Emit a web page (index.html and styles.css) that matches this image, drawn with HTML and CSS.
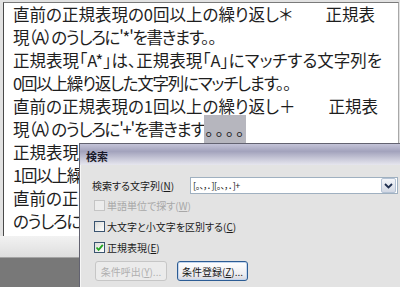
FILE: index.html
```html
<!DOCTYPE html>
<html lang="ja">
<head>
  <meta charset="UTF-8">
  <meta name="viewport" content="width=device-width, initial-scale=1.0">
  <title>検索</title>
  <link rel="stylesheet" href="styles.css">
</head>
<body>
  <div class="screen">
    <div class="editor">
      <div class="doc">
        <div class="line">直前の正規表現の0回以上の繰り返し＊　　正規表</div>
        <div class="line tight">現（A）のうしろに'*'を書きます。。</div>
        <div class="line">正規表現「A*」は、正規表現「A」にマッチする文字列を</div>
        <div class="line tight">0回以上繰り返した文字列にマッチします。。</div>
        <div class="line">直前の正規表現の1回以上の繰り返し＋　　正規表</div>
        <div class="line tight">現（A）のうしろに'+'を書きます<span class="sel">。。。。</span></div>
        <div class="line">正規表現「A+」は、正規表現「A」にマッチする</div>
        <div class="line tight">1回以上繰り返した文字列にマッチします。</div>
        <div class="line">直前の正規表現の0回または1回の繰り返し？</div>
        <div class="line tight">のうしろに'?'を書きます。</div>
        <div class="line">正規表現「A?」は、正規表現「A」にマッチする</div>
      </div>
      <div class="status"></div>
    </div>
    <div class="desk"></div>

    <div class="dialog">
      <div class="titlebar">検索</div>
      <div class="dlg-body">
        <div class="find-row">
          <label class="find-label">検索する文字列(<u>N</u>)</label>
          <div class="combo">
            <span class="combo-text">[。、，．][。、，．]+</span>
            <span class="combo-btn">
              <svg width="9" height="6" viewBox="0 0 9 6"><path d="M1 1 L4.5 4.5 L8 1" fill="none" stroke="#1f2f4f" stroke-width="1.8"/></svg>
            </span>
          </div>
        </div>
        <div class="check disabled"><span class="box"></span>単語単位で探す(<u>W</u>)</div>
        <div class="check"><span class="box"></span>大文字と小文字を区別する(<u>C</u>)</div>
        <div class="check">
          <span class="box">
            <svg width="9" height="9" viewBox="0 0 9 9"><path d="M1.5 4.5 L3.6 6.8 L7.8 1.8" fill="none" stroke="#22a622" stroke-width="1.8"/></svg>
          </span>正規表現(<u>E</u>)
        </div>
        <div class="buttons">
          <button class="btn" disabled>条件呼出(<u>Y</u>)...</button>
          <button class="btn default">条件登録(<u>Z</u>)...</button>
        </div>
      </div>
    </div>
  </div>
</body>
</html>
```

FILE: styles.css
```css
body {
  margin: 0;
  overflow: hidden;
  background-color: #787878;
  font-family: "Noto Sans CJK JP", sans-serif;
}
.screen {
  position: relative;
  width: 400px;
  height: 287px;
  overflow: hidden;
  background-color: #787878;
}
.editor {
  background-color: #e2e2e2;
  padding: 2px 1px 0 3px;
}
.doc {
  height: 234px;
  box-sizing: border-box;
  background-color: #fff;
  border-top: 1px solid #7a7a7a;
  border-left: 1px solid #4a4a4a;
  border-right: 1px solid #a8a8a8;
  padding-left: 9px;
  overflow: hidden;
}
.line {
  height: 23px;
  line-height: 23px;
  font-size: 16.5px;
  color: #1e1e1e;
  white-space: nowrap;
  font-feature-settings: "palt";
}
.line.tight {
  letter-spacing: -1.2px;
}
.sel {
  background-color: #b6b6be;
  letter-spacing: 2px;
  padding: 2px 0 2px 1px;
}
.status {
  height: 21px;
  margin-left: -3px;
  margin-right: -1px;
  background: linear-gradient(#f2f2f2, #dedede);
  border-bottom: 1px solid #a4a4a4;
}

/* search dialog */
.dialog {
  position: absolute;
  left: 79px;
  top: 143px;
  width: 340px;
  height: 160px;
  background-color: #e3e3e3;
  border: 1px solid #626270;
  box-shadow: inset 1px 0 0 #f6f6f6;
  font-size: 10px;
  color: #1a1a1a;
  font-feature-settings: "palt";
}
.titlebar {
  height: 21px;
  line-height: 24px;
  padding-left: 6px;
  font-size: 11px;
  font-weight: bold;
  color: #1a1a2a;
  background: linear-gradient(#c4c4d8, #a2a2bc 35%, #c8c8d8 70%, #e6e6ee);
}
.dlg-body {
  padding: 12px 0 0 12px;
}
.find-row {
  display: flex;
  align-items: center;
  height: 17px;
}
.find-label {
  width: 98px;
  line-height: 17px;
}
.combo {
  display: flex;
  align-items: center;
  width: 208px;
  height: 17px;
  box-sizing: border-box;
  background-color: #fff;
  border: 1px solid #9fb0c0;
}
.combo-text {
  flex: 1;
  padding-left: 2px;
  font-size: 9px;
  letter-spacing: -0.5px;
  line-height: 15px;
}
.combo-btn {
  display: flex;
  align-items: center;
  justify-content: center;
  width: 13px;
  height: 13px;
  margin-right: 1px;
  background: linear-gradient(#f4f6fa, #d2d8e4);
  border: 1px solid #b4c2d4;
  border-radius: 2px;
}
.check {
  display: flex;
  align-items: center;
  height: 21px;
  padding-left: 2px;
}
.find-row + .check {
  margin-top: 1px;
}
.box {
  display: flex;
  align-items: center;
  justify-content: center;
  width: 11px;
  height: 11px;
  box-sizing: border-box;
  margin-right: 2px;
  border: 1px solid #3a5470;
  background: linear-gradient(135deg, #dcdcd8, #fff);
}
.check.disabled {
  color: #a8a8a8;
}
.check.disabled .box {
  border-color: #c4c4c4;
  background: #ececec;
}
.buttons {
  display: flex;
  gap: 10px;
  margin-top: 3px;
  padding-left: 3px;
}
.btn {
  width: 72px;
  height: 20px;
  padding: 0;
  font-family: inherit;
  font-size: 10px;
  font-feature-settings: "palt";
  color: #1a1a1a;
  border: 1px solid #7a8aa0;
  border-radius: 3px;
  background: linear-gradient(#ffffff, #ececf0 70%, #d6d6de);
}
.btn:disabled {
  color: #b0b0b0;
  border-color: #c6c6c6;
  background: #ebebeb;
}
.btn.default {
  width: 71px;
  border-color: #2c5c94;
  box-shadow: inset 0 0 0 1px #c4d6ee;
}
```
